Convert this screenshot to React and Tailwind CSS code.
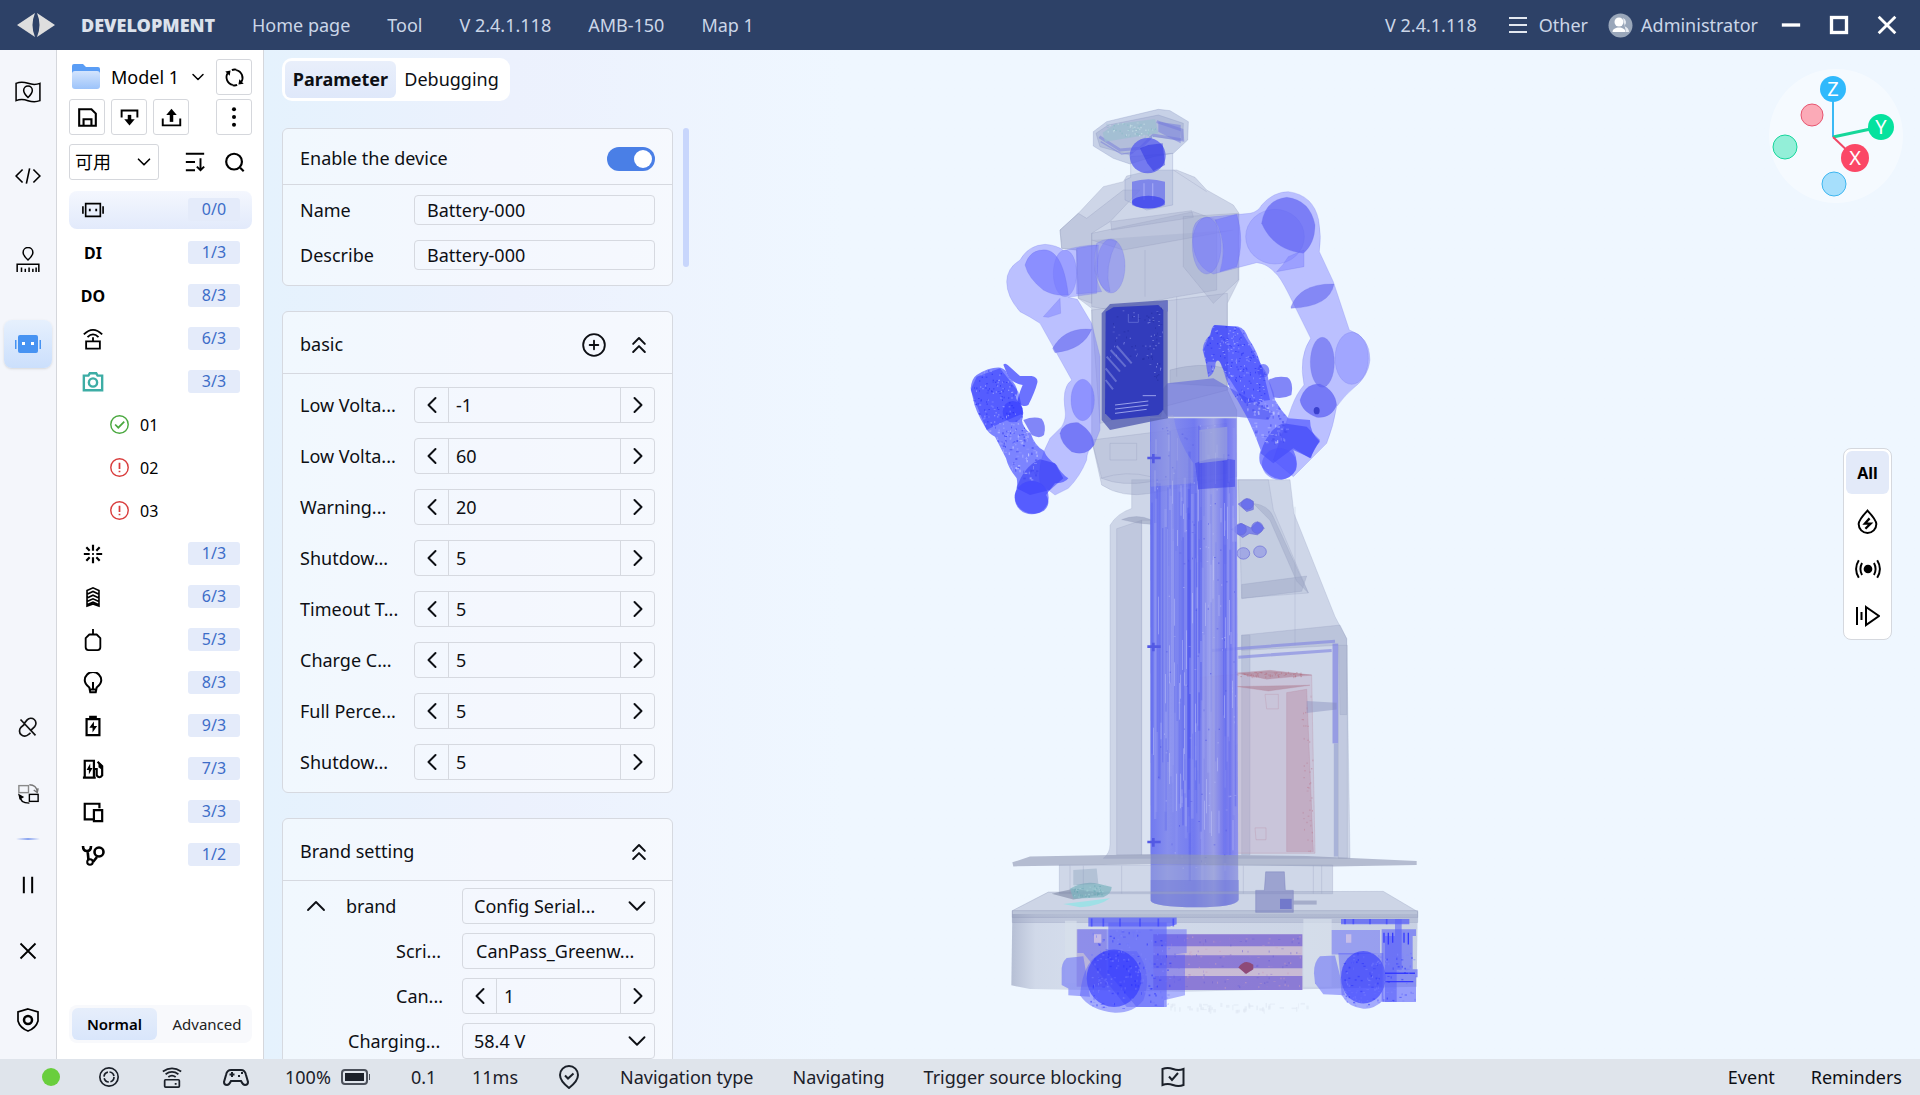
import React from "react";
import { ChevronDown, ChevronLeft, ChevronRight, ChevronUp, ChevronsUp, CirclePlus } from "lucide-react";

const navItems = ["Home page", "Tool", "V 2.4.1.118", "AMB-150", "Map 1"];

function Icon({ size = 24, width = 2, className = "", children }) {
  return (
    <svg
      width={size}
      height={size}
      viewBox="0 0 24 24"
      fill="none"
      stroke="currentColor"
      strokeWidth={width}
      className={"shrink-0 " + className}
      aria-hidden="true"
    >
      {children}
    </svg>
  );
}

function Header() {
  return (
    <header className="flex h-[50px] shrink-0 items-center bg-[#2d4167] text-[18px] text-[#cbd6e8]">
      <svg width="38" height="24" viewBox="0 0 38 24" className="ml-[17px] shrink-0" aria-hidden="true">
        <path d="M18 0 Q13 12 18 24 L0 12Z M20 0 Q25 12 20 24 L38 12Z" fill="#dedede" />
      </svg>
      <h1 className="ml-[26px] w-[134px] text-[18px] font-black text-[#dce2ec]">DEVELOPMENT</h1>
      <nav className="ml-[37px] flex items-center gap-[37px]">
        {navItems.map((item) => (
          <a key={item} href="#" className="whitespace-nowrap">
            {item}
          </a>
        ))}
      </nav>
      <div className="ml-auto flex items-center">
        <span>V 2.4.1.118</span>
        <button className="ml-8 flex items-center gap-3">
          <svg width="18" height="18" viewBox="0 0 18 18" stroke="#e3e8f0" strokeWidth="2" aria-hidden="true">
            <path d="M0 2h18M0 9h18M0 16h18" />
          </svg>
          Other
        </button>
        <button className="ml-5 flex items-center gap-2">
          <svg width="25" height="25" viewBox="0 0 25 25" aria-hidden="true">
            <circle cx="12.500" cy="12.500" r="12" fill="#9aa7ba" />
            <path d="M15 5a4.500 4.500 0 0 1 1 8c3 1 5 3 5 6h-3z" fill="#e7ebf1" />
            <circle cx="11" cy="9" r="4.500" fill="#fff" />
            <path d="M4.500 19c0-6 13-6 13 0z" fill="#fff" />
          </svg>
          Administrator
        </button>
        <button aria-label="Minimize" className="ml-[23px]">
          <Icon size={20} width={4}><path d="M1 12h22" stroke="#fff" /></Icon>
        </button>
        <button aria-label="Maximize" className="ml-7">
          <Icon size={20} width={4}><rect x="3" y="3" width="18" height="18" stroke="#fff" /></Icon>
        </button>
        <button aria-label="Close" className="ml-7 mr-[23px]">
          <Icon size={20} width={3.4}><path d="M2 2l20 20M22 2L2 22" stroke="#fff" /></Icon>
        </button>
      </div>
    </header>
  );
}

function RailButton({ label, children, className = "" }) {
  return (
    <button aria-label={label} className={"flex h-12 w-12 items-center justify-center rounded-lg " + className}>
      {children}
    </button>
  );
}

function Rail() {
  return (
    <aside className="flex w-[57px] shrink-0 flex-col items-center border-r border-[#d5d7dc] bg-[#f4f6fb] text-black">
      <div className="mt-[18px] flex flex-col gap-9">
        <RailButton label="Map">
          <Icon size={26} width={1.4}>
            <path d="M1 4q5 -2 11 0t11 0v16q-5 2 -11 0t-11 0z" />
            <path d="M12 17q-4-4-4-6.500a4 4 0 0 1 8 0q0 2.500-4 6.500z" />
          </Icon>
        </RailButton>
        <RailButton label="Scripts">
          <Icon size={26} width={1.5}>
            <path d="M7 6l-6 6 6 6M17 6l6 6-6 6M13.500 5l-3 14" />
          </Icon>
        </RailButton>
        <RailButton label="Calibration">
          <Icon size={26} width={1.4}>
            <path d="M12 12q-4.500-4-4.500-7a4.500 4.500 0 0 1 9 0q0 3-4.500 7z" />
            <path d="M2 23v-7h20v7M6 23v-4M9.500 23v-3M13 23v-4M16.500 23v-3M19.500 23v-4" />
          </Icon>
        </RailButton>
        <RailButton label="Robot" className="bg-linear-to-b from-[#e6f0fd] to-[#cbdffc] shadow-sm">
          <svg width="26" height="18" viewBox="0 0 26 18" fill="#4793f2" aria-hidden="true">
            <rect x="3" width="20" height="18" rx="2" />
            <path d="M0 5h1.500v9H0zM24.500 5H26v9h-1.500z" />
            <path d="M7 7h3v3H7zM16 7h3v3h-3z" fill="#fff" />
          </svg>
        </RailButton>
      </div>
      <div className="mt-auto flex flex-col items-center gap-[18px] pb-[15px]">
        <RailButton label="Disconnect">
          <Icon size={20} width={2} className="text-[#111]">
            <path d="M8 7l3-3.500a6 6 0 0 1 9 8l-4 4M15 19l-2.500 2a6 6 0 0 1-9-8.500l4-3.500M3 3l18 19" />
          </Icon>
        </RailButton>
        <RailButton label="Sync screens">
          <Icon size={21} width={1.6}>
            <rect x="1" y="3" width="11" height="8" stroke="#8a8a8a" />
            <rect x="13" y="13" width="10" height="8" />
            <path d="M13 2q8 0 9 8M18 8l4 3 1-5" stroke="#777" />
            <path d="M2 14q0 9 11 9" />
            <path d="M0 12l7 4-5 3z" fill="currentColor" stroke="none" />
          </Icon>
        </RailButton>
        <div className="my-[3px] h-[2px] w-6 rounded-full bg-linear-to-r from-transparent via-[#8aa4f0] to-transparent" />
        <RailButton label="Pause">
          <Icon size={20} width={2.4}><path d="M7 2v20M17 2v20" /></Icon>
        </RailButton>
        <RailButton label="Cancel">
          <Icon size={20} width={2.2}><path d="M3 3l18 18M21 3L3 21" /></Icon>
        </RailButton>
        <RailButton label="Safety" className="mt-[3px]">
          <Icon size={24} width={1.7}>
            <path d="M12 1l10 3v9q-2 7-10 10q-8-3-10-10v-9z" />
            <circle cx="12" cy="12" r="4" strokeWidth="2.500" />
          </Icon>
        </RailButton>
      </div>
    </aside>
  );
}

const glyphs = {
  bot: (
    <Icon size={22} width={1.8}>
      <path d="M4 5h16v14H4zM1 8v8M23 8v8" />
      <path d="M7.500 12h2M14.500 12h2" strokeWidth="2.500" />
    </Icon>
  ),
  radar: (
    <Icon size={22} width={2}>
      <path d="M4.500 14.500h15v8h-15zM12 14v-4M2 7q10-10 20 0M6 10q6-6 12 0" />
    </Icon>
  ),
  camera: (
    <Icon size={22} width={2.6} className="text-[#3dada5]">
      <path d="M2 5h5l1.500-2.500h7L17 5h5v16H2z" />
      <circle cx="12" cy="12.500" r="4.500" />
    </Icon>
  ),
  laser: (
    <Icon size={20} width={2.6}>
      <path d="M12 1v7M12 16v7M1 12h7M16 12h7M4 4l4 4M16 16l4 4M20 4l-4 4M8 16l-4 4M11 12h2" />
    </Icon>
  ),
  track: (
    <Icon size={22} width={1.8}>
      <path d="M5.500 5l6.500-3 6.500 3v17l-6.500-2.500L5.500 22zM5.500 9l6.500-3 6.500 3M5.500 13l6.500-3 6.500 3M5.500 17l6.500-3 6.500 3M5.500 20.500l6.500-3 6.500 3" />
    </Icon>
  ),
  bumper: (
    <Icon size={22} width={2}>
      <path d="M12 0v6M8 6h8l4 4v10q0 3-3 3H7q-3 0-3-3V10z" strokeLinejoin="round" />
    </Icon>
  ),
  bulb: (
    <Icon size={22} width={2.2}>
      <path d="M8 17q-5-4-5-8a9 9 0 0 1 18 0q0 4-5 8l-1 5H9zM9 19h6M12 11v7" />
    </Icon>
  ),
  battery: (
    <Icon size={22} width={2.4}>
      <path d="M5 4.500h14V22H5zM9 4V2h6v2" />
      <path d="M13 7l-5 7h3.500v5l5-7H13z" fill="currentColor" stroke="none" />
    </Icon>
  ),
  charger: (
    <Icon size={22} width={2.4}>
      <path d="M3 22V3h10v19M1 21.500h14M13 12h3v7q3 4 6 0V9l-5-5" />
      <path d="M18 5l4 3v5l-4-3z" fill="currentColor" stroke="none" />
      <path d="M9 6l-4 7h2.500v5l4-7H9z" fill="currentColor" stroke="none" />
    </Icon>
  ),
  screens: (
    <Icon size={22} width={2.4}>
      <path d="M12 20H3V3h16v5M13 10h9v12h-9z" />
    </Icon>
  ),
  tools: (
    <Icon size={24} width={2.6}>
      <circle cx="18" cy="9" r="4.500" />
      <circle cx="9" cy="19" r="2.800" strokeWidth="2" />
      <path d="M2 3q0 5 4 5t4-5M6.500 7l1 10M12 19l4-5" />
    </Icon>
  ),
};

const treeRows = [
  { icon: "bot", count: "0/0", active: true },
  { text: "DI", count: "1/3" },
  { text: "DO", count: "8/3" },
  { icon: "radar", count: "6/3" },
  { icon: "camera", count: "3/3" },
  { child: "01", ok: true },
  { child: "02", ok: false },
  { child: "03", ok: false },
  { icon: "laser", count: "1/3" },
  { icon: "track", count: "6/3" },
  { icon: "bumper", count: "5/3" },
  { icon: "bulb", count: "8/3" },
  { icon: "battery", count: "9/3" },
  { icon: "charger", count: "7/3" },
  { icon: "screens", count: "3/3" },
  { icon: "tools", count: "1/2" },
];

function TreeRow({ row }) {
  if (row.child) {
    return (
      <li className="flex h-[43px] items-center gap-[11px] pl-[41px]">
        {row.ok ? (
          <Icon size={19} width={1.8} className="text-[#4aa83f]">
            <circle cx="12" cy="12" r="11" />
            <path d="M6.500 12l4 4 7.500-7.500" strokeWidth="2.200" />
          </Icon>
        ) : (
          <Icon size={19} width={1.8} className="text-[#d93c3c]">
            <circle cx="12" cy="12" r="11" />
            <path d="M12 6v8M12 16v2" strokeWidth="2.200" />
          </Icon>
        )}
        <span>{row.child}</span>
      </li>
    );
  }
  return (
    <li className="flex h-[43px] items-center">
      <button
        className={
          "flex h-[38px] w-full items-center rounded-lg pr-3 " +
          (row.active ? "bg-linear-to-b from-[#f4f7fe] to-[#e2eafb]" : "")
        }
      >
        <span className="flex w-12 justify-center font-bold">{row.text || glyphs[row.icon]}</span>
        <span className="ml-auto h-[23px] w-[52px] rounded-[3px] bg-[#e4ebfa] text-center leading-[23px] text-[#3d6dc8]">
          {row.count}
        </span>
      </button>
    </li>
  );
}

function ToolButton({ label, className = "", children }) {
  return (
    <button
      aria-label={label}
      className={"flex h-9 w-9 items-center justify-center rounded-[3px] border border-[#d5d7dc] bg-white " + className}
    >
      {children}
    </button>
  );
}

function ModelPanel() {
  return (
    <aside className="flex w-[207px] shrink-0 flex-col border-r border-[#d5d7dc] bg-white pr-[11px] pl-3 text-[16px] text-black">
      <div className="mt-[9px] flex items-center">
        <button className="flex items-center text-[18px]">
          <svg width="30" height="28" viewBox="0 0 30 28" className="ml-[2px]" aria-hidden="true">
            <defs>
              <linearGradient id="folder" x2="0" y2="1">
                <stop stopColor="#d3e4fd" />
                <stop offset="1" stopColor="#9cc3fa" />
              </linearGradient>
            </defs>
            <path d="M1 3q0-2 2-2h9l3 3h12q2 0 2 2v14H1z" fill="#5a9df5" />
            <path d="M4 8h22q3 0 3 3v12q0 3-3 3H4q-3 0-3-3V11q0-3 3-3z" fill="url(#folder)" />
          </svg>
          <span className="ml-[10px] whitespace-nowrap">Model 1</span>
          <ChevronDown size={20} strokeWidth={1.8} className="ml-[9px]" />
        </button>
        <ToolButton label="Refresh" className="ml-auto">
          <Icon size={21} width={2.1}>
            <path d="M10 20.500a9 9 0 0 1-5.500-14M14 3.500a9 9 0 0 1 5.500 14M9 3.500q2-1 5-.5M15 20.500q-2 1-5 .5" />
            <path d="M1.500 5l6-1-1 6zM22.500 19l-6 1 1-6z" fill="currentColor" stroke="none" />
          </Icon>
        </ToolButton>
      </div>
      <div className="mt-1 flex gap-[6px]">
        <ToolButton label="Save">
          <Icon size={21} width={2.4}>
            <path d="M2.500 2.500h14l5 5v14h-19zM7.500 21v-7h9v7" />
          </Icon>
        </ToolButton>
        <ToolButton label="Import">
          <Icon size={21} width={2.2}>
            <path d="M3 12V4h18v8" />
            <path d="M12 9v7" strokeWidth="4" />
            <path d="M6 14h12l-6 7z" fill="currentColor" stroke="none" />
          </Icon>
        </ToolButton>
        <ToolButton label="Export">
          <Icon size={21} width={2.2}>
            <path d="M2 13v8h20v-8" />
            <path d="M12 8v9" strokeWidth="4" />
            <path d="M6 9h12l-6-7z" fill="currentColor" stroke="none" />
          </Icon>
        </ToolButton>
        <ToolButton label="More" className="ml-auto">
          <Icon size={22}>
            <g fill="currentColor" stroke="none">
              <circle cx="12" cy="3.500" r="2.200" />
              <circle cx="12" cy="12" r="2.200" />
              <circle cx="12" cy="20.500" r="2.200" />
            </g>
          </Icon>
        </ToolButton>
      </div>
      <div className="mt-[9px] flex items-center">
        <div className="grid w-[90px] items-center">
          <select
            aria-label="Filter"
            className="col-start-1 row-start-1 h-9 appearance-none rounded-[3px] border border-[#d5d7dc] bg-white pl-[5px] text-[18px]"
          >
            <option>可用</option>
          </select>
          <ChevronDown size={22} strokeWidth={1.8} className="pointer-events-none col-start-1 row-start-1 mr-1 justify-self-end" />
        </div>
        <button aria-label="Sort" className="ml-auto">
          <Icon size={22} width={2.1}>
            <path d="M2 3h20M2 12h10M2 21h10M18 8v13M14 17l4 4 4-4" />
          </Icon>
        </button>
        <button aria-label="Search" className="mr-[7px] ml-[18px]">
          <Icon size={21} width={2.5}>
            <circle cx="11.500" cy="11" r="9" />
            <path d="M18.500 18l4 4" />
          </Icon>
        </button>
      </div>
      <ul className="mt-2">
        {treeRows.map((row, i) => (
          <TreeRow key={i} row={row} />
        ))}
      </ul>
      <div className="mt-auto mb-4 flex h-[38px] items-center rounded-lg bg-[#f8f9fc] p-[3px] text-[15px]">
        <button className="h-full w-[85px] rounded-md bg-linear-to-b from-[#e6eefb] to-[#d9e6fb] font-semibold">Normal</button>
        <button className="h-full flex-1 pl-2 text-[#222]">Advanced</button>
      </div>
    </aside>
  );
}

const basicParams = [
  { label: "Low Volta...", value: "-1" },
  { label: "Low Volta...", value: "60" },
  { label: "Warning...", value: "20" },
  { label: "Shutdow...", value: "5" },
  { label: "Timeout T...", value: "5" },
  { label: "Charge C...", value: "5" },
  { label: "Full Perce...", value: "5" },
  { label: "Shutdow...", value: "5" },
];

function Stepper({ id, value }) {
  return (
    <div className="flex h-9 min-w-0 flex-1 items-center rounded-[4px] border border-[#d6d9e0]">
      <button aria-label="Decrease" className="flex h-full w-[34px] shrink-0 items-center justify-center border-r border-[#d6d9e0]">
        <ChevronLeft size={28} strokeWidth={1.7} />
      </button>
      <input id={id} defaultValue={value} className="min-w-0 flex-1 px-[7px]" />
      <button aria-label="Increase" className="flex h-full w-[34px] shrink-0 items-center justify-center border-l border-[#d6d9e0]">
        <ChevronRight size={28} strokeWidth={1.7} />
      </button>
    </div>
  );
}

function SelectBox({ id, value }) {
  return (
    <div className="grid min-w-0 flex-1 items-center">
      <select id={id} className="col-start-1 row-start-1 h-9 w-full appearance-none rounded-[4px] border border-[#d6d9e0] pl-[11px]">
        <option>{value}</option>
      </select>
      <ChevronDown size={30} strokeWidth={1.5} className="pointer-events-none col-start-1 row-start-1 mr-[3px] justify-self-end" />
    </div>
  );
}

function Card({ children }) {
  return <section className="rounded-md border border-[#d6d9e0] bg-white/45">{children}</section>;
}

function ParameterPanel() {
  return (
    <div className="flex min-h-0 w-[432px] shrink-0 flex-col overflow-hidden pl-[18px] text-[18px] text-[#0d0f14]">
      <div className="mt-2 flex h-[43px] shrink-0 self-start rounded-[10px] bg-white p-[3px]">
        <button className="w-[111px] rounded-md bg-linear-to-b from-[#e9effb] to-[#dfe8fa] font-bold">Parameter</button>
        <button className="w-[111px]">Debugging</button>
      </div>
      <div className="mt-[27px] flex min-h-0 gap-[10px] overflow-hidden">
        <div className="flex w-[391px] flex-col gap-[25px]">
          <Card>
            <div className="flex h-14 items-center justify-between border-b border-[#d6d9e0] px-[17px] pt-1">
              <label htmlFor="enable">Enable the device</label>
              <input
                id="enable"
                type="checkbox"
                role="switch"
                defaultChecked
                className="h-6 w-12 appearance-none rounded-full bg-[#4a7fe6] before:mt-[3px] before:ml-[27px] before:block before:h-[18px] before:w-[18px] before:rounded-full before:bg-white"
              />
            </div>
            <div className="flex flex-col gap-[15px] px-[17px] pt-[10px] pb-[15px]">
              {["Name", "Describe"].map((name) => (
                <div key={name} className="flex items-center">
                  <label htmlFor={name} className="w-[114px]">{name}</label>
                  <input id={name} defaultValue="Battery-000" className="h-[30px] min-w-0 flex-1 rounded-[4px] border border-[#d6d9e0] px-3" />
                </div>
              ))}
            </div>
          </Card>
          <Card>
            <div className="flex h-[62px] items-center border-b border-[#d6d9e0] pt-1 pr-[19px] pl-[17px]">
              <h2>basic</h2>
              <button aria-label="Add" className="ml-auto">
                <CirclePlus size={26} strokeWidth={1.7} />
              </button>
              <button aria-label="Collapse basic" className="ml-[18px]">
                <ChevronsUp size={28} strokeWidth={1.7} />
              </button>
            </div>
            <div className="flex flex-col gap-[15px] px-[17px] pt-[13px] pb-3">
              {basicParams.map((param, i) => (
                <div key={i} className="flex items-center">
                  <label htmlFor={`basic-${i}`} className="w-[114px] whitespace-nowrap">{param.label}</label>
                  <Stepper id={`basic-${i}`} value={param.value} />
                </div>
              ))}
            </div>
          </Card>
          <Card>
            <div className="flex h-[62px] items-center justify-between border-b border-[#d6d9e0] pt-1 pr-[19px] pl-[17px]">
              <h2>Brand setting</h2>
              <button aria-label="Collapse brand setting">
                <ChevronsUp size={28} strokeWidth={1.7} />
              </button>
            </div>
            <div className="flex flex-col gap-[9px] px-[17px] pt-[7px] pb-[13px]">
              <div className="flex items-center">
                <button aria-label="Collapse brand" className="w-[46px]">
                  <ChevronUp size={32} strokeWidth={1.4} />
                </button>
                <label htmlFor="brand" className="w-[116px]">brand</label>
                <SelectBox id="brand" value="Config Serial..." />
              </div>
              <div className="flex items-center">
                <label htmlFor="script" className="w-[162px] pl-24">Scri...</label>
                <input id="script" defaultValue="CanPass_Greenw..." className="h-9 min-w-0 flex-1 rounded-[4px] border border-[#d6d9e0] px-[13px]" />
              </div>
              <div className="flex items-center">
                <label htmlFor="can" className="w-[162px] pl-24">Can...</label>
                <Stepper id="can" value="1" />
              </div>
              <div className="flex items-center">
                <label htmlFor="charging" className="w-[162px] pl-12">Charging...</label>
                <SelectBox id="charging" value="58.4 V" />
              </div>
            </div>
          </Card>
        </div>
        <div className="h-[139px] w-[6px] rounded-full bg-[#c8d6fc]" />
      </div>
    </div>
  );
}

// small repeatable generator so the textures stay the same between renders
function scatter(count, seed) {
  let s = seed;
  const next = () => {
    s = (s * 16807) % 2147483647;
    return s / 2147483647;
  };
  return Array.from({ length: count }, () => [next(), next(), next()]);
}

function Specks({ x, y, w, h, count, seed, colors = ["#1c24f5", "#b9bfff"], size = 6 }) {
  return scatter(count, seed).map(([a, b, c], i) => (
    <rect
      key={i}
      x={Math.round(x + a * w)}
      y={Math.round(y + b * h)}
      width={Math.round(2 + c * size)}
      height={Math.round(2 + (1 - c) * size)}
      fill={colors[i % colors.length]}
      opacity="0.5"
    />
  ));
}

function Arm({ children }) {
  return <g fill="#7275ff" fillOpacity="0.42" stroke="#6468e8" strokeOpacity="0.3" strokeWidth="2">{children}</g>;
}

const handLeft = "M92 895Q95 865 110 855Q150 830 182 833Q200 838 206 860Q235 890 232 910Q220 925 240 940Q255 960 246 992Q250 1015 272 1030Q285 1070 312 1082Q320 1105 350 1125Q362 1150 385 1165Q375 1180 345 1180L318 1215Q335 1240 312 1262Q280 1282 245 1260Q224 1245 224 1215Q235 1190 230 1165Q205 1135 198 1105L165 1040Q145 1030 135 1010Q105 960 100 930Z";
const handRight = "M788 780Q790 750 812 735Q812 710 825 705L895 710Q915 715 925 745Q955 790 962 825Q985 850 985 870Q1002 900 1005 930Q1022 960 1045 985L1110 990Q1110 1030 1140 1055Q1120 1075 1113 1105L1060 1080Q1075 1110 1068 1140Q1050 1170 1020 1168Q980 1162 960 1120Q955 1100 962 1080Q940 1020 920 980L892 930Q862 890 850 840Q838 800 828 815Q825 850 805 862Q800 840 798 820Z";

function RobotModel() {
  return (
    <svg viewBox="0 0 1500 2820" className="w-[500px] shrink-0" role="img" aria-label="Robot model">
      <defs>
        <clipPath id="handL"><path d={handLeft} /></clipPath>
        <clipPath id="handR"><path d={handRight} /></clipPath>
        <clipPath id="wheelL"><path d="M360 1390L410 1340V1270H740V1465L670 1500L570 1515H490L430 1490L365 1450Z" /></clipPath>
        <clipPath id="wheelR"><path d="M1122 1390L1175 1340V1270H1430V1485H1330L1270 1505L1215 1485L1125 1445Z" /></clipPath>
        <linearGradient id="shell">
          <stop stopColor="#8f99b8" stopOpacity="0.6" />
          <stop offset="0.060" stopColor="#a3acc8" stopOpacity="0.4" />
          <stop offset="0.140" stopColor="#aab3cd" stopOpacity="0.4" />
          <stop offset="1" stopColor="#a3acc8" stopOpacity="0.5" />
        </linearGradient>
        <linearGradient id="column">
          <stop stopColor="#5f68f2" />
          <stop offset="0.200" stopColor="#7a82ee" />
          <stop offset="0.500" stopColor="#626af2" />
          <stop offset="0.550" stopColor="#7077f0" />
          <stop offset="0.720" stopColor="#9297e8" />
          <stop offset="0.850" stopColor="#6166f2" />
          <stop offset="1" stopColor="#868af0" />
        </linearGradient>
      </defs>

      {/* rear housing and mast */}
      <g transform="translate(0 1230) scale(1 1.014)">
        <g fill="#a0a9c8" fillOpacity="0.42" stroke="#8d96b8" strokeOpacity="0.35" strokeWidth="2">
          <path d="M575 -60H1050L1062 40L1185 345L1220 410L1230 1060H490Q510 1045 510 1020V75Q530 40 575 25Z" />
          <path d="M530 85L605 60V1050H530Z" fillOpacity="0.3" />
          <path d="M605 60H632V1050H605Z" fill="#eef5fc" />
          <path d="M545 58Q590 40 632 58V72Q590 70 545 58Z" fill="#7c86a8" />
          <path d="M895 -60H985L1000 30L1105 275L905 290Z" fillOpacity="0.2" />
          <path d="M905 250L1100 225L1085 270L905 292Z" fillOpacity="0.5" />
          <path d="M940 10Q985 15 1000 50L1105 275L1070 240L990 60Z" fillOpacity="0.5" />
          <path d="M905 400L1200 370L1220 410V635H1200L1196 430L905 445Z" fillOpacity="0.4" />
          <path d="M905 400H930V1050H905ZM1065 20V430" fillOpacity="0.4" />
          <path d="M1195 430H1222V1060H1195Z" fillOpacity="0.25" />
        </g>
        <path d="M815 445L1185 418M895 465L1175 445" stroke="#8488e2" strokeWidth="9" strokeOpacity="0.65" fill="none" />
        <path d="M1186 425V720" stroke="#8488e2" strokeWidth="17" strokeOpacity="0.75" />
        <path d="M1188 720V1055" stroke="#9aa4d2" strokeWidth="13" strokeOpacity="0.7" />
        <g fill="#bd9cb8" fillOpacity="0.28" stroke="#b78599" strokeOpacity="0.4" strokeWidth="2">
          <path d="M780 525L985 508L1115 518L1125 1045H780Z" />
          <path d="M1040 570L1100 560L1120 1040H1040Z" fill="#b0708c" />
          <path d="M890 512L990 504L1115 518L980 530ZM890 552L1110 548L985 565Z" fill="#a05c70" fillOpacity="0.4" />
          <path d="M975 575H1015V618H980ZM945 970H978V1005H948Z" fillOpacity="0" />
        </g>
        <path d="M1100 595L1190 600V620L1100 630Z" fill="#8088b8" fillOpacity="0.4" />
        <Specks x={885} y={508} w={200} h={14} count={60} seed={61} colors={["#b5707f"]} size={4} />
        <Specks x={1085} y={560} w={35} h={480} count={40} seed={9} colors={["#bb7f95"]} size={4} />

        {/* bolts */}
        <g fill="#6368ec" fillOpacity="0.7" stroke="#6a6ed8" strokeWidth="2">
          <path d="M895 12l25-16 20 8v24l-20 6z" />
          <ellipse cx="922" cy="12" rx="18" ry="16" />
          <path d="M875 87l28-18 30 14 20-18 20 18-20 20-25-4-20 12z" />
          <ellipse cx="902" cy="87" rx="17" ry="17" />
          <ellipse cx="952" cy="82" rx="17" ry="17" />
          <ellipse cx="910" cy="158" rx="19" ry="17" fillOpacity="0.35" />
          <ellipse cx="960" cy="153" rx="19" ry="17" fillOpacity="0.35" />
        </g>
      </g>

      {/* torso */}
      <g fill="#a0a9c8" fillOpacity="0.42" stroke="#8d96b8" strokeOpacity="0.4" strokeWidth="2">
        <path d="M360 420L415 370L490 290L550 275L560 258L640 240L710 240L765 262L800 300L880 345L897 370V570L862 640V900L890 960V1160L632 1210Q545 1225 485 1185L455 1050V655L415 625L410 480L365 475Z" />
        <path d="M455 430L760 365L830 390V600L700 622L510 660L455 650Z" fillOpacity="0.35" />
        <path d="M360 420L415 370L440 385L550 300L600 300L510 395L455 430V640L415 625L410 480L365 475Z" fillOpacity="0.3" />
        <path d="M512 395L755 362L760 382L515 420ZM455 450L550 480L880 420" fillOpacity="0.35" />
        <path d="M730 380L895 370V570L820 640L730 530Z" fillOpacity="0.3" />
        <path d="M455 660L862 610V900L480 1000Z" fillOpacity="0.25" />
        <path d="M455 1050L860 1000V1150L632 1175Q545 1190 485 1165Z" fillOpacity="0.3" />
        <path d="M690 840Q780 815 860 835V890L690 880Z" fillOpacity="0.5" />
        <path d="M482 1165Q560 1140 632 1160M615 480V620M710 620V860M510 1060h80v50h-80zM700 240L800 305" fill="none" />
      </g>

      {/* lift column */}
      <path d="M682 880L820 865L890 905L950 940L1000 965L985 990L890 980H630V945Z" fill="#6168dc" fillOpacity="0.6" />
      <path d="M630 985H890L895 2430Q885 2452 770 2452Q640 2450 632 2432Z" fill="url(#column)" fillOpacity="0.85" />
      {scatter(80, 27).map(([a, b, c], i) => (
        <rect
          key={i}
          x={Math.round(634 + a * 254)}
          y={Math.round(990 + b * 450)}
          width={Math.round(2 + c * 6)}
          height={Math.round(600 + c * 380)}
          fill={["#4a51ee", "#a9aef4", "#5a62f0", "#959af2"][i % 4]}
          opacity="0.3"
        />
      ))}
      {scatter(60, 59).map(([a, b, c], i) => (
        <rect
          key={i}
          x={Math.round(640 + a * 245)}
          y={Math.round(1000 + b * 1200)}
          width="2"
          height={Math.round(30 + c * 90)}
          fill="#ccd0fb"
          opacity="0.6"
        />
      ))}
      <Specks x={650} y={1000} w={236} h={1350} count={110} seed={77} colors={["#b8bcfa", "#4a50e8"]} size={4} />
      <path d="M765 1120Q820 1095 885 1110V1190L775 1198Z" fill="#3a40ea" fillOpacity="0.55" />
      <path d="M778 1020L862 1010V1110L778 1120Z" fill="#a0a8d8" fillOpacity="0.6" />
      <path d="M632 1190L760 1180V1120Q710 1050 700 975L632 985Z" fill="#a8afd8" fillOpacity="0.3" />
      <path d="M632 2370H897V2430Q885 2452 770 2452Q640 2450 632 2432Z" fill="#4249e6" fillOpacity="0.4" />
      <path d="M622 1104h40M640 1092v28M622 1670h40M640 1658v26M622 2256h40M640 2244v26" stroke="#5359e4" strokeWidth="8" />

      {/* tablet on the chest */}
      <path d="M485 670L510 642L683 630V985L655 990L510 1020L485 990Z" fill="#5a64b4" fillOpacity="0.85" />
      <path d="M497 665L520 652L655 645L670 660V960L655 975L515 990L495 970Z" fill="#323cbc" />
      <path d="M655 640L683 632V665L668 655ZM668 960L685 985H662Z" fill="#6a73c4" />
      <path d="M530 768l45 52M512 780l45 50M500 800l40 45M497 835l32 40M497 870l22 28" stroke="#8d96e0" strokeWidth="6" strokeOpacity="0.55" />
      <path d="M525 945l100-12M525 957l100-12M525 970l95-12M608 917h40" stroke="#98a0ea" strokeWidth="3" />
      <path d="M565 672v25h30v-25" stroke="#5a64d0" strokeWidth="3" fill="none" />
      <Specks x={510} y={660} w={150} h={150} count={40} seed={45} colors={["#8f98ee", "#222b9e"]} size={4} />
      <Specks x={620} y={650} w={50} h={220} count={45} seed={5} colors={["#a0a8f2", "#222b9e"]} size={4} />

      {/* head and neck */}
      <g fill="#a0abd0" fillOpacity="0.5" stroke="#8d98c4" strokeOpacity="0.5" strokeWidth="2">
        <path d="M460 125L500 95L655 58L690 62L745 95L743 150L700 190L640 200L570 222L520 205L460 168Z" />
        <path d="M468 130L505 105L655 75L730 100L728 150L640 140L570 195L480 170Z" />
        <path d="M572 200L698 190V345L620 360L555 330V270L572 262Z" fillOpacity="0.3" />
      </g>
      <path d="M478 140L540 180L600 175L640 135L728 150L726 120L650 95" fill="none" stroke="#7f86da" strokeWidth="9" strokeOpacity="0.6" />
      <path d="M482 155L545 192L580 188" fill="none" stroke="#7f86da" strokeWidth="4" strokeOpacity="0.6" />
      <path d="M655 95L722 105V160L655 125Z" fill="#7177dd" fillOpacity="0.5" />
      <path d="M488 128L525 102L645 87L655 130L560 145L495 155Z" fill="#9cbfd0" fillOpacity="0.7" />
      <Specks x={500} y={98} w={145} h={42} count={60} seed={33} colors={["#7fbcc4", "#d9f2f2"]} size={4} />
      <ellipse cx="623" cy="197" rx="54" ry="53" fill="#5358ee" fillOpacity="0.75" />
      <path d="M600 175L625 165L668 160L675 225L640 243L622 220Z" fill="#2a30e4" fillOpacity="0.5" />
      <path d="M576 275Q625 260 675 275V345Q625 368 576 345Z" fill="#6a70ec" fillOpacity="0.75" />
      <path d="M612 280v50M638 280v50" stroke="#9fa4f4" strokeWidth="4" />
      <ellipse cx="625" cy="336" rx="49" ry="19" fill="#3b42ee" fillOpacity="0.75" />

      {/* arm on the left */}
      <Arm>
        <path d="M200 575Q200 535 240 510Q265 465 315 463Q350 465 372 482Q420 465 475 465L470 610L385 622L412 628L455 700L480 800V1020L462 1065Q440 1080 440 1110Q420 1160 385 1195L345 1215L300 1180Q290 1120 330 1045L365 1010Q380 985 375 960Q365 890 395 870L300 700Q270 680 240 665Q200 620 200 575Z" />
        <ellipse cx="513" cy="528" rx="42" ry="81" />
        <path d="M410 475L470 465Q450 540 485 605L410 612Z" />
        <path d="M470 460Q500 440 530 455Q490 530 510 605Q480 600 465 540Z" fillOpacity="0.3" />
        <ellipse cx="375" cy="550" rx="35" ry="70" />
        <path d="M255 525Q270 475 320 480Q370 490 385 615Q345 620 310 600Q265 565 255 525Z" fillOpacity="0.65" />
        <path d="M338 775Q375 710 455 718Q430 780 345 788Z" fill="#5f62ee" fillOpacity="0.6" />
        <ellipse cx="428" cy="930" rx="35" ry="62" fillOpacity="0.6" />
        <path d="M360 1030Q370 995 415 998Q460 1025 462 1065Q440 1100 395 1085Q362 1060 360 1030Z" fill="#5f63f4" fillOpacity="0.75" />
        <path d="M310 680L360 625L362 670L325 682Z" />
      </Arm>

      {/* arm on the right */}
      <Arm>
        <path d="M757 440Q757 385 800 382L930 370Q955 365 965 345Q1000 305 1045 305Q1120 315 1136 390Q1145 440 1138 485L1180 575L1228 720Q1290 740 1290 810Q1285 860 1240 895Q1215 915 1190 950Q1180 1010 1160 1060L1110 1110L1060 1160L1000 1110L1055 950Q1070 910 1092 885Q1075 800 1112 745L1045 610Q1020 560 1005 548Q980 520 950 518L820 552Q760 530 757 440Z" />
        <ellipse cx="800" cy="467" rx="43" ry="85" />
        <path d="M825 390L890 373Q915 450 890 530L840 545Q865 460 825 390Z" fillOpacity="0.6" />
        <ellipse cx="1005" cy="440" rx="88" ry="82" fillOpacity="0.3" />
        <path d="M965 400Q975 330 1040 322Q1110 330 1125 405Q1125 460 1090 490Q1000 480 965 400Z" fill="#5f62f2" fillOpacity="0.7" />
        <path d="M1010 545Q1030 525 1045 500L1092 480V530Z" />
        <path d="M1053 650Q1080 580 1182 582Q1170 650 1053 655Z" fill="#5f62ee" fillOpacity="0.6" />
        <ellipse cx="1147" cy="817" rx="36" ry="75" fill="#5f62ee" fillOpacity="0.6" />
        <ellipse cx="1235" cy="805" rx="50" ry="78" fillOpacity="0.35" />
        <path d="M1080 930Q1095 880 1140 882Q1185 900 1190 945Q1175 985 1130 982Q1085 965 1080 930Z" fill="#5f63f4" fillOpacity="0.75" />
      </Arm>

      {/* hands */}
      <path d={handLeft} fill="#4c52ff" fillOpacity="0.7" />
      <path d="M190 824Q196 818 204 826L240 858L275 858Q295 862 292 878Q285 905 265 945Q250 955 232 935Q235 915 248 885Q220 880 205 860Z" fill="#4a50ff" fillOpacity="0.8" />
      <path d="M250 990Q280 978 305 986Q320 1005 312 1035Q300 1048 275 1035Z" fill="#6569f6" fillOpacity="0.8" />
      <path d="M92 900L110 860L180 835L235 905L250 970L180 1000L140 1020Z" fill="#262eff" fillOpacity="0.45" />
      <ellipse cx="218" cy="965" rx="30" ry="32" fill="#262eff" fillOpacity="0.4" />
      <path d="M230 1195Q250 1130 300 1108L345 1120L370 1165L330 1200L270 1215Z" fill="#2a30f4" fillOpacity="0.5" />
      <ellipse cx="275" cy="1223" rx="51" ry="50" fill="#3d43ff" fillOpacity="0.6" />
      <g clipPath="url(#handL)">
        <Specks x={90} y={830} w={170} h={240} count={260} seed={101} size={4} />
        <Specks x={170} y={1020} w={120} h={150} count={90} seed={303} colors={["#3a40f0", "#d0d4ff", "#9fa4ff"]} size={8} />
      </g>
      <path d={handRight} fill="#4c52ff" fillOpacity="0.66" />
      <path d="M985 870Q1010 856 1042 862Q1062 875 1054 915Q1030 928 1000 922Z" fill="#6569f6" fillOpacity="0.8" />
      <ellipse cx="970" cy="842" rx="18" ry="20" fill="#5a60f8" fillOpacity="0.7" />
      <path d="M790 780L822 705L895 710L965 825L990 930L915 940L845 830Q838 805 828 815L798 815Z" fill="#262eff" fillOpacity="0.45" />
      <path d="M962 1090Q980 1020 1030 1000L1100 1010L1140 1050L1110 1105L1060 1075L1000 1120Z" fill="#2a30f4" fillOpacity="0.45" />
      <ellipse cx="1018" cy="1122" rx="52" ry="47" fill="#4a50ff" fillOpacity="0.5" />
      <ellipse cx="1130" cy="962" rx="9" ry="11" fill="#3a40cc" />
      <g clipPath="url(#handR)">
        <Specks x={788} y={705} w={190} h={240} count={300} seed={202} size={4} />
        <Specks x={920} y={920} w={120} h={140} count={100} seed={404} colors={["#3a40f0", "#d0d4ff", "#9fa4ff"]} size={8} />
      </g>

      {/* chassis */}
      <g transform="translate(0 1230) scale(1 1.014)">
        <path d="M217 1072L270 1055L640 1048L1100 1053L1430 1068V1080L1180 1084L640 1078L220 1084Z" fill="#9097b4" fillOpacity="0.62" />
        <path d="M358 1080H1178V1165H358Z" fill="#a3acc8" fillOpacity="0.42" stroke="#8d96b8" strokeOpacity="0.4" strokeWidth="2" />
        <path d="M390 1082V1165M430 1082V1165M545 1082V1165M910 1082V1165M1120 1082V1165M1145 1082V1165" stroke="#8d96b8" strokeOpacity="0.4" strokeWidth="2" />
        <path d="M217 1215L325 1160L1330 1158L1433 1218V1250H217Z" fill="#9ea7c4" fillOpacity="0.42" stroke="#8d96b8" strokeOpacity="0.5" strokeWidth="2" />
        <path d="M217 1215H1433V1235H217Z" fill="#a6afc8" fillOpacity="0.45" stroke="#7f88aa" strokeOpacity="0.5" strokeWidth="2" />
        <path d="M217 1225H1433L1430 1440L730 1455L270 1447L214 1436Z" fill="url(#shell)" />
        <path d="M375 1245H410V1430H375ZM1090 1240H1175V1440H1090Z" fill="#d7dfeb" fillOpacity="0.7" />
        <path d="M335 1165L400 1150L500 1165L400 1182Z" fill="#7d87a3" fillOpacity="0.6" />
        <path d="M390 1150Q430 1125 475 1135L515 1145Q515 1165 490 1175L400 1180Z" fill="#7fb4c0" fillOpacity="0.75" />
        <path d="M370 1195L510 1178Q480 1200 420 1205Z" fill="#9fe0e6" />
        <path d="M400 1095L470 1090L475 1135L400 1140Z" fill="#7f9ab5" fillOpacity="0.35" />
        <Specks x={400} y={1138} w={95} h={35} count={50} seed={14} colors={["#5fa6b0", "#a7d8dc"]} size={4} />
        <path d="M977 1100H1033L1036 1155H1060V1220H947V1155H973Z" fill="#7a80c0" fillOpacity="0.6" stroke="#6a70b5" strokeOpacity="0.5" strokeWidth="2" />
        <path d="M1020 1180h35v30h-35z" fill="#4a50c8" fillOpacity="0.5" />
        <path d="M1060 1185h70v12h-70z" fill="#8a92b8" fillOpacity="0.6" />
        {/* battery pack */}
        <path d="M640 1285H1087V1450H640Z" fill="#c4a9c8" fillOpacity="0.6" />
        <path d="M640 1285H1087V1320H640ZM640 1347H1087V1385H640ZM640 1408H1087V1450H640Z" fill="#7766d6" fillOpacity="0.75" />
        <path d="M410 1270H500V1440H410Z" fill="#9784c9" fillOpacity="0.45" />
        <Specks x={690} y={1288} w={390} h={155} count={150} seed={88} colors={["#6a60d8", "#c9a0c0", "#9a80d4"]} size={5} />
        <path d="M895 1383Q915 1355 940 1375V1388L918 1402Z" fill="#8e4a78" />
        {/* drive wheels */}
        <g fill="#5a60fa" fillOpacity="0.6">
          <path d="M445 1235H710V1255L690 1262H445ZM1203 1240H1408V1255H1203Z" fillOpacity="0.75" />
          <path d="M412 1270H740V1340L700 1345H735V1465L672 1480V1500H560L430 1340H412ZM1175 1272H1320V1340L1240 1345H1175Z" fillOpacity="0.45" />
          <path d="M505 1250H680V1500H590L505 1400Z" />
          <path d="M420 1465Q430 1350 500 1335H590Q640 1400 610 1480Q580 1518 525 1517Q450 1510 420 1465Z" fillOpacity="0.5" />
          <ellipse cx="522" cy="1415" rx="82" ry="85" fill="#2d34ff" />
          <path d="M365 1400Q362 1370 380 1355L430 1350L450 1470L385 1465V1445L365 1435Z" fillOpacity="0.5" />
          <path d="M1195 1340H1330V1480Q1300 1508 1270 1505Q1225 1500 1205 1465Z" fillOpacity="0.5" />
          <ellipse cx="1270" cy="1412" rx="67" ry="78" fill="#2d34ff" />
          <path d="M1122 1400Q1122 1365 1140 1350L1185 1348L1215 1465L1150 1462L1125 1430Z" fillOpacity="0.5" />
          <path d="M1325 1270H1428V1290H1418V1388H1433V1412H1428V1485H1325Z" />
          <path d="M1335 1290H1370V1485H1335ZM1365 1240H1385V1390H1365Z" />
        </g>
        <path d="M462 1285h22v25h-22zM1218 1285h16v25h-16z" fill="#d3c6e6" fillOpacity="0.8" />
        <path d="M455 1238v24M490 1238v24M540 1238v24M600 1238v24M655 1238v24M700 1238v24M1215 1240v15M1240 1240v15M1290 1240v15M1340 1240v15" stroke="#343aff" strokeWidth="5" strokeOpacity="0.6" />
        <path d="M1332 1280v30M1345 1280v35M1358 1280v30M1392 1280v30M1405 1280v35M1335 1400h90M1335 1425h85" stroke="#343aff" strokeWidth="4" />
        <g clipPath="url(#wheelL)">
          <Specks x={450} y={1270} w={240} h={235} count={240} seed={501} colors={["#262dff", "#6d73ff", "#8288ff"]} />
        </g>
        <g clipPath="url(#wheelR)">
          <Specks x={1210} y={1340} w={215} h={160} count={160} seed={602} colors={["#262dff", "#6d73ff", "#8288ff"]} />
        </g>
        {/* faint reflection on the floor */}
        <Specks x={690} y={1488} w={430} h={22} count={45} seed={731} colors={["#dde6f2"]} size={14} />
      </g>
    </svg>
  );
}

function AxisGizmo() {
  return (
    <svg width="136" height="136" viewBox="0 0 136 136" className="mt-[18px] mr-4" role="img" aria-label="View axes">
      <circle cx="68" cy="68" r="67" fill="#fff" fillOpacity="0.4" />
      <path d="M65 69V22" stroke="#3ab9f5" strokeWidth="2" />
      <path d="M65 69L112 59" stroke="#15d79a" strokeWidth="3" />
      <path d="M65 69L87 90" stroke="#ef4766" strokeWidth="2" />
      <circle cx="65" cy="21" r="13" fill="#30b9fc" />
      <circle cx="113" cy="59" r="13" fill="#05e29e" />
      <circle cx="87" cy="90" r="14" fill="#fb4766" />
      <circle cx="44" cy="47" r="11" fill="#fbaab7" stroke="#e75470" />
      <circle cx="17" cy="79" r="12" fill="#93efd8" stroke="#16d69c" />
      <circle cx="66" cy="116" r="12" fill="#a6dffc" stroke="#3db6f0" />
      <g fill="#fff" fontSize="20" textAnchor="middle">
        <text x="65" y="28">Z</text>
        <text x="113" y="66">Y</text>
        <text x="87" y="97">X</text>
      </g>
    </svg>
  );
}

function ViewTools() {
  return (
    <div className="mt-[244px] mr-7 flex flex-col items-center rounded-lg border border-[#d5d8de] bg-white p-[2px] text-black">
      <button className="mb-[2px] h-[43px] w-[43px] rounded-md bg-[#e3eaf9] text-[16px] font-bold">All</button>
      <button aria-label="Power" className="flex h-[47px] w-[43px] items-center justify-center pt-1">
        <Icon size={25} width={1.9}>
          <path d="M12 1.500q8.500 9 8.500 13a8.500 8.500 0 0 1-17 0q0-4 8.500-13z" />
          <path d="M14 9l-4.500 5h5.500l-5 5" strokeWidth="2.200" />
        </Icon>
      </button>
      <button aria-label="Signal" className="flex h-[47px] w-[43px] items-center justify-center pt-1">
        <Icon size={26} width={1.8}>
          <circle cx="12" cy="12" r="4" fill="currentColor" stroke="none" />
          <path d="M6.500 6.500q-3 5.500 0 11M3.500 4q-5 8 0 16M17.500 6.500q3 5.500 0 11M20.500 4q5 8 0 16" />
        </Icon>
      </button>
      <button aria-label="Play" className="flex h-[47px] w-[43px] items-center justify-center pt-1">
        <Icon size={24} width={2}>
          <path d="M1 3v18M5.500 8v8M10 3l13 9-13 9z" />
        </Icon>
      </button>
    </div>
  );
}

function StatusBar() {
  return (
    <footer className="flex h-9 shrink-0 items-center bg-[#dfe4eb] text-[18px] whitespace-nowrap text-[#1b2029]">
      <span className="ml-[42px] h-[18px] w-[18px] rounded-full bg-[#69ce3d]" />
      <Icon size={20} width={2} className="ml-[39px]">
        <circle cx="12" cy="12" r="11" />
        <circle cx="12" cy="12" r="6" strokeDasharray="7.400 2" strokeWidth="2" />
      </Icon>
      <Icon size={22} width={1.9} className="ml-[42px]">
        <rect x="4" y="15" width="16" height="8" rx="1" />
        <path d="M2 6q10-7 20 0M5 9q7-5 14 0M8 12q4-3 8 0M15 19.500h2" />
      </Icon>
      <svg width="26" height="20" viewBox="0 0 26 20" fill="none" stroke="currentColor" strokeWidth="2" className="ml-[40px] shrink-0" aria-hidden="true">
        <path d="M8 3h10q4 0 5 5l2 7q0 3-3 3-2 0-4-4H8q-2 4-4 4-3 0-3-3l2-7q1-5 5-5z" />
        <path d="M9 5v5M6.500 7.500h5M15 9h2M18 6h2" />
      </svg>
      <span className="ml-[36px] w-[48px]">100%</span>
      <svg width="30" height="18" viewBox="0 0 30 18" className="ml-2 shrink-0" aria-hidden="true">
        <rect x="1" y="2" width="25" height="14" rx="3" fill="none" stroke="#4b505a" strokeWidth="2" />
        <rect x="4" y="5" width="19" height="8" fill="#1b2029" />
        <path d="M28 6h1v6h-1z" fill="#4b505a" />
      </svg>
      <span className="ml-10 w-[25px]">0.1</span>
      <span className="ml-9 w-[46px]">11ms</span>
      <Icon size={24} width={2} className="ml-[39px]">
        <path d="M12 23q-9-7-9-13a9 9 0 0 1 18 0q0 6-9 13zM8 10.500l3 3 5.500-5" />
      </Icon>
      <span className="ml-[39px]">Navigation type</span>
      <span className="ml-[39px]">Navigating</span>
      <span className="ml-[39px]">Trigger source blocking</span>
      <Icon size={24} width={2} className="ml-[39px]">
        <path d="M1.500 4q5-2 10.500 0t10.500 0v16q-5 2-10.500 0t-10.500 0zM8 11.500l3 3.500 6-7" />
      </Icon>
      <a href="#" className="ml-auto text-[#0d0f14]">Event</a>
      <a href="#" className="mr-[18px] ml-9 text-[#0d0f14]">Reminders</a>
    </footer>
  );
}

function App() {
  return (
    <div className="flex h-screen flex-col overflow-hidden font-['Noto_Sans','Noto_Sans_CJK_SC',sans-serif]">
      <Header />
      <main className="flex min-h-0 flex-1">
        <Rail />
        <ModelPanel />
        <div className="flex min-w-0 flex-1 overflow-hidden bg-linear-to-r from-[#e5f2fd] via-[#ecf1fd] via-15% to-[#eff7ff] to-35%">
          <ParameterPanel />
          <div className="flex min-w-0 flex-1 items-start justify-center overflow-hidden pt-10">
            <RobotModel />
          </div>
          <div className="flex w-[236px] shrink-0 flex-col items-end">
            <AxisGizmo />
            <ViewTools />
          </div>
        </div>
      </main>
      <StatusBar />
    </div>
  );
}

export default App;
